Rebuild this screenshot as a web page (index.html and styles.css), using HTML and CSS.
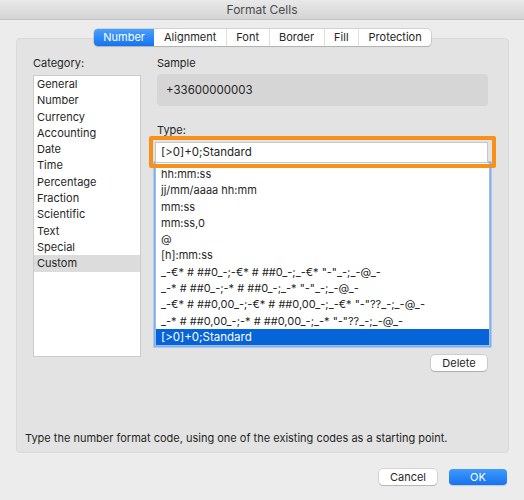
FILE: index.html
```html
<!DOCTYPE html>
<html lang="en">
<head>
<meta charset="utf-8">
<title>Format Cells</title>
<link rel="stylesheet" href="styles.css">
</head>
<body>
<div class="window">
  <div class="titlebar">Format Cells</div>
  <div class="content">
    <div class="tabs">
      <div class="tab active">Number</div>
      <div class="tab">Alignment</div>
      <div class="tab">Font</div>
      <div class="tab">Border</div>
      <div class="tab">Fill</div>
      <div class="tab">Protection</div>
    </div>
    <div class="panel">
      <div class="columns">
        <div class="cat-col">
          <div class="label">Category:</div>
          <ul class="cat-list">
            <li>General</li>
            <li>Number</li>
            <li>Currency</li>
            <li>Accounting</li>
            <li>Date</li>
            <li>Time</li>
            <li>Percentage</li>
            <li>Fraction</li>
            <li>Scientific</li>
            <li>Text</li>
            <li>Special</li>
            <li class="selected">Custom</li>
          </ul>
        </div>
        <div class="main-col">
          <div class="label">Sample</div>
          <div class="sample">+33600000003</div>
          <div class="label type-label">Type:</div>
          <div class="type-field">
            <div class="input">[&gt;0]+0;Standard</div>
            <div class="highlight"></div>
          </div>
          <ul class="fmt-list">
            <li>hh:mm:ss</li>
            <li>jj/mm/aaaa hh:mm</li>
            <li>mm:ss</li>
            <li>mm:ss,0</li>
            <li>@</li>
            <li>[h]:mm:ss</li>
            <li>_-€* # ##0_-;-€* # ##0_-;_-€* "-"_-;_-@_-</li>
            <li>_-* # ##0_-;-* # ##0_-;_-* "-"_-;_-@_-</li>
            <li>_-€* # ##0,00_-;-€* # ##0,00_-;_-€* "-"??_-;_-@_-</li>
            <li>_-* # ##0,00_-;-* # ##0,00_-;_-* "-"??_-;_-@_-</li>
            <li class="selected">[&gt;0]+0;Standard</li>
          </ul>
          <div class="actions">
            <button class="btn">Delete</button>
          </div>
        </div>
      </div>
      <p class="hint">Type the number format code, using one of the existing codes as a starting point.</p>
    </div>
    <div class="footer">
      <button class="btn wide">Cancel</button>
      <button class="btn wide primary">OK</button>
    </div>
  </div>
</div>
</body>
</html>
```

FILE: styles.css
```css
* { box-sizing: border-box; }

html, body {
  margin: 0;
  padding: 0;
}

body {
  width: 524px;
  height: 500px;
  background: #ececec;
  font-family: Inter, "Liberation Sans", Arial, sans-serif;
  font-size: 11px;
  color: #262626;
  overflow: hidden;
}

.window {
  width: 524px;
  height: 500px;
}

.titlebar {
  height: 20px;
  line-height: 19px;
  text-align: center;
  font-size: 12px;
  color: #4b4b4b;
  background: linear-gradient(#e9e9e9, #d4d4d4);
  border-bottom: 1px solid #c4c4c4;
}

.content {
  padding: 0 15px 0 16px;
}

.tabs {
  position: relative;
  z-index: 1;
  margin: 9px auto 0;
  display: flex;
  width: max-content;
  height: 17px;
  background: #fff;
  border-radius: 4px;
  box-shadow: 0 0 0 0.5px rgba(0,0,0,0.22), 0 1px 1px rgba(0,0,0,0.12);
}

.tab {
  line-height: 17px;
  padding: 0 9.5px;
  border-left: 1px solid #e0e0e0;
  color: #262626;
}

.tab:first-child { border-left: none; }

.tab.active {
  color: #fff;
  background: linear-gradient(#4aa0fb, #1673ef);
  border-radius: 4px 0 0 4px;
}

.tab.active + .tab { border-left: none; }

.panel {
  margin-top: -8px;
  height: 415px;
  display: flex;
  flex-direction: column;
  background: #e3e3e3;
  border: 1px solid #dadada;
  border-radius: 4px;
  padding: 17px 0 7px;
}

.columns {
  display: flex;
  gap: 14px;
  padding-left: 16px;
}

.label {
  line-height: 14px;
  height: 14px;
}

.cat-col {
  width: 108px;
}

ul {
  list-style: none;
  margin: 0;
  padding: 0;
}

li {
  line-height: 16.3px;
  height: 16.3px;
  white-space: nowrap;
}

.cat-list {
  margin-top: 5px;
  height: 282px;
  background: #fff;
  border: 1px solid #cbcbcb;
}

.cat-list li { padding-left: 3px; }

.cat-list li.selected { background: #dcdcdc; }

.main-col {
  width: 335px;
  display: flex;
  flex-direction: column;
}

.main-col .label { padding-left: 2px; }

.sample {
  margin: 4px 0 0 2px;
  width: 331px;
  height: 32px;
  line-height: 32px;
  padding-left: 9px;
  background: #d6d6d6;
  border-radius: 4px;
  font-size: 11.5px;
}

.type-label {
  margin-top: 17px;
}

.type-field {
  position: relative;
  margin-top: 5px;
  width: 333px;
}

.input {
  height: 21px;
  line-height: 19px;
  padding-left: 5px;
  background: #fff;
  border: 1px solid #c6c6c6;
  font-size: 11.5px;
}

.highlight {
  position: absolute;
  left: -6px;
  top: -6px;
  right: -8px;
  bottom: -5px;
  border: 4px solid #f8901c;
  border-radius: 2px;
  pointer-events: none;
}

.fmt-list {
  width: 335px;
  background: #fff;
  padding-top: 3px;
  border: 1px solid #9dbde8;
  border-top: none;
  box-shadow: 0 0 0 1.5px #7fb0f3;
}

.fmt-list li { padding-left: 5px; }

.fmt-list li.selected {
  background: #0764d8;
  color: #fff;
  font-size: 11.5px;
}

.actions {
  display: flex;
  justify-content: flex-end;
  padding-right: 3px;
  margin-top: 9px;
}

.btn {
  font-family: inherit;
  font-size: 11px;
  color: #262626;
  background: #fff;
  border: none;
  border-radius: 4px;
  height: 16px;
  width: 56px;
  padding: 0;
  box-shadow: 0 0 0 0.5px rgba(0,0,0,0.2), 0 1px 1px rgba(0,0,0,0.15);
}

.hint {
  margin: auto 0 0;
  padding-left: 8px;
  line-height: 14px;
}

.footer {
  display: flex;
  justify-content: flex-end;
  gap: 12px;
  margin-top: 16px;
  padding-right: 2px;
}

.btn.wide { width: 58px; }

.btn.primary {
  color: #fff;
  background: linear-gradient(#3f9afc, #1673ef);
  box-shadow: 0 1px 1px rgba(0,0,0,0.15);
}
```
